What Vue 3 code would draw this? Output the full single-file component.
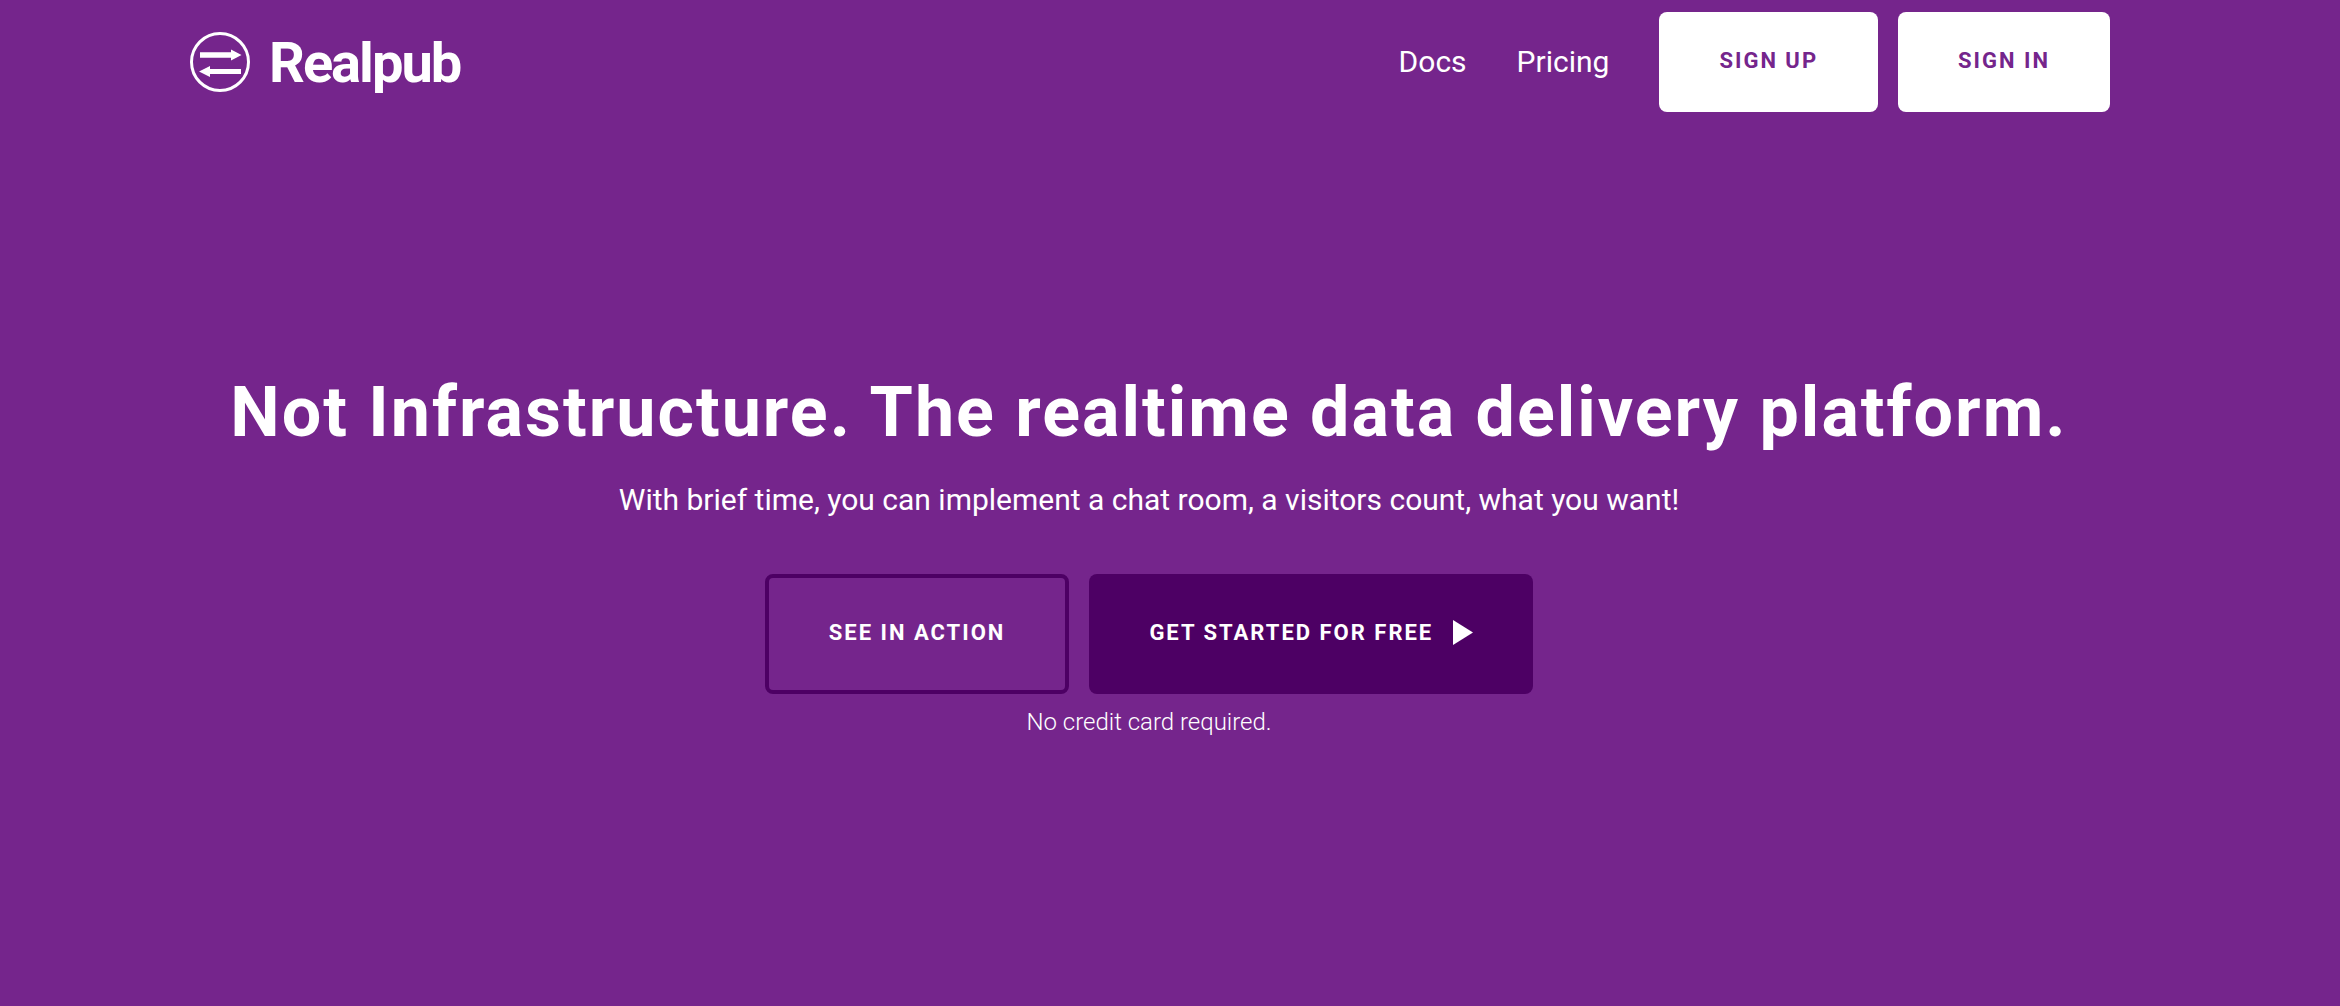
<template>
  <div class="page">
    <header class="header">
      <a class="brand" href="#">
        <svg class="brand-icon" viewBox="0 0 60 60" aria-hidden="true">
          <circle cx="30" cy="30" r="28.5" fill="none" stroke="#fff" stroke-width="3" />
          <path d="M10 20.3H41V17.5L51.5 23L41 28.5V25.8H10Z" fill="#fff" />
          <path d="M51 37H20V34L9 39.500L20 45V42H51Z" fill="#fff" />
        </svg>
        <span class="brand-name">Realpub</span>
      </a>
      <nav class="nav">
        <a v-for="link in links" :key="link" class="nav-link" href="#">{{ link }}</a>
        <div class="account">
          <button class="btn btn-white" type="button">Sign up</button>
          <button class="btn btn-white" type="button">Sign in</button>
        </div>
      </nav>
    </header>

    <main class="hero">
      <h1 class="title">Not Infrastructure. The realtime data delivery platform.</h1>
      <p class="lead">With brief time, you can implement a chat room, a visitors count, what you want!</p>
      <div class="actions">
        <button class="btn btn-large btn-outline" type="button">See in action</button>
        <button class="btn btn-large btn-dark" type="button">
          Get started for free
          <svg class="play" viewBox="0 0 20 25" aria-hidden="true">
            <path d="M0 0L20 12.500L0 25Z" fill="#fff" />
          </svg>
        </button>
      </div>
      <p class="note">No credit card required.</p>
    </main>
  </div>
</template>

<script setup>
const links = ['Docs', 'Pricing']
</script>

<style>
body { background: #75258c; }
</style>

<style scoped>
.page { padding: 0 40px 0 0; color: #fff; font-family: Roboto, "Liberation Sans", sans-serif; }
.header { display: flex; align-items: center; justify-content: space-between; max-width: 1920px; margin: 0 auto; padding: 12px 0; }
.brand { display: flex; align-items: center; gap: 19px; color: #fff; text-decoration: none; }
.brand-icon { width: 60px; height: 60px; }
.brand-name { padding-top: 2px; font-size: 56px; font-weight: 700; line-height: 60px; letter-spacing: -2px; }
.nav { display: flex; align-items: center; gap: 50px; }
.nav-link { color: #fff; font-size: 30px; line-height: 40px; text-decoration: none; }
.account { display: flex; gap: 20px; }

.btn { display: flex; align-items: center; justify-content: center; gap: 20px; height: 100px; padding: 0 60px 3px; border: 0; border-radius: 8px; font-family: inherit; font-size: 22px; font-weight: 700; letter-spacing: 2px; text-transform: uppercase; cursor: pointer; }
.btn-white { background: #fff; color: #75258c; }
.btn-large { height: 120px; color: #fff; }
.btn-outline { border: 4px solid #4d0064; background: transparent; }
.btn-dark { background: #4d0064; }
.play { width: 20px; height: 25px; }

.hero { display: flex; flex-direction: column; align-items: center; padding: 240px 2px 240px 0; text-align: center; }
.title { margin: 0; font-size: 70px; font-weight: 700; line-height: 96px; letter-spacing: 2px; }
.lead { margin: 20px 0 54px; font-size: 30px; line-height: 40px; }
.actions { display: flex; gap: 20px; }
.note { margin: 12px 0 0; font-size: 24px; font-weight: 300; line-height: 32px; }
</style>
